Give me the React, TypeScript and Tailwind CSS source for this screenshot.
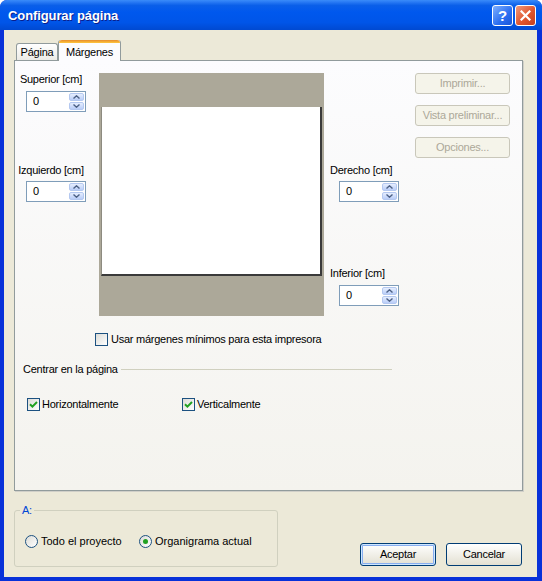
import React from "react";

function Arrow({ up }: { up: boolean }) {
  return (
    <svg width="7" height="4" viewBox="0 0 7 4">
      <path
        d={up ? "M0.5 3.5L3.5 0.8L6.5 3.5" : "M0.5 0.5L3.5 3.2L6.5 0.5"}
        fill="none"
        stroke="#4d6185"
        strokeWidth="1.4"
      />
    </svg>
  );
}

function Spinner() {
  return (
    <div className="flex h-[21px] w-[60px] border border-[#7f9db9] bg-white">
      <div className="flex-1 pl-[6px] text-[11px] leading-[19px]">0</div>
      <div className="flex w-[16px] flex-col gap-[1px] py-[1px] pr-[1px]">
        <div className="flex flex-1 items-center justify-center rounded-[2px] border border-[#b4c8f0] bg-gradient-to-b from-[#e6eefe] to-[#b9cdf8]">
          <Arrow up />
        </div>
        <div className="flex flex-1 items-center justify-center rounded-[2px] border border-[#b4c8f0] bg-gradient-to-b from-[#e6eefe] to-[#b9cdf8]">
          <Arrow up={false} />
        </div>
      </div>
    </div>
  );
}

function Check({ checked }: { checked?: boolean }) {
  return (
    <div className="flex h-[13px] w-[13px] shrink-0 items-center justify-center border border-[#1c5180] bg-gradient-to-br from-[#dcdcd7] to-white">
      {checked && (
        <svg width="9" height="9" viewBox="0 0 9 9">
          <path d="M1 4.3L3.4 6.7L8 2" fill="none" stroke="#21a121" strokeWidth="2" />
        </svg>
      )}
    </div>
  );
}

function Radio({ checked }: { checked?: boolean }) {
  return (
    <div className="flex h-[13px] w-[13px] shrink-0 items-center justify-center rounded-full border border-[#1c5180] bg-gradient-to-br from-[#dcdcd7] to-white">
      {checked && <div className="h-[5px] w-[5px] rounded-full bg-[#21a121]" />}
    </div>
  );
}

function DisabledButton({ label }: { label: string }) {
  return (
    <div className="flex h-[21px] w-[95px] items-center justify-center rounded-[3px] border border-[#c9c7ba] bg-[#f5f4ea] text-[11px] text-[#aca899]">
      {label}
    </div>
  );
}

export default function App() {
  return (
    <div className="flex h-[581px] w-[542px] flex-col overflow-hidden rounded-t-[7px] bg-[#0831d9] font-['Liberation_Sans',Arial,sans-serif] text-[11px] text-black">
      {/* Title bar */}
      <div className="flex h-[30px] shrink-0 items-center justify-between bg-[linear-gradient(180deg,#3a8cf9_0%,#2b7cf5_6%,#0a5fe9_18%,#0058ee_40%,#0055e8_75%,#0049d1_100%)] pl-[8px] pr-[6px]">
        <div className="text-[13px] font-bold leading-none tracking-[-0.1px] text-white [text-shadow:1px_1px_0_#0a1e8c]">
          Configurar página
        </div>
        <div className="flex gap-[2px]">
          <div className="flex h-[21px] w-[21px] items-center justify-center rounded-[3px] border border-white bg-[linear-gradient(135deg,#7fb0ff,#2a6df0_60%,#1a55d8)] text-[15px] font-bold leading-none text-white">
            ?
          </div>
          <div className="flex h-[21px] w-[21px] items-center justify-center rounded-[3px] border border-white bg-[linear-gradient(135deg,#f19a7c,#e0562f_55%,#c4401e)]">
            <svg width="11" height="11" viewBox="0 0 11 11">
              <path d="M1.5 1.5L9.5 9.5M9.5 1.5L1.5 9.5" stroke="white" strokeWidth="2.2" strokeLinecap="square" />
            </svg>
          </div>
        </div>
      </div>

      {/* Body */}
      <div className="flex flex-1 flex-col border-b-4 border-l-4 border-r-[5px] border-[#0831d9] bg-[#ece9d8] pl-[10px] pr-[15px] pt-[10px] tracking-[-0.25px]">
        {/* Tabs */}
        <div className="flex h-[20px] items-end pl-[2px]">
          <div className="flex h-[17px] w-[42px] items-center justify-center rounded-t-[3px] border border-b-0 border-[#919b9c] bg-gradient-to-b from-white to-[#ecebe6]">
            Página
          </div>
          <div className="relative z-10 -mb-px flex h-[21px] w-[63px] flex-col rounded-t-[3px] border-x border-[#919b9c] bg-[#fcfcfe]">
            <div className="h-[3px] rounded-t-[3px] bg-[linear-gradient(180deg,#e68b2c,#ffc73c)]" />
            <div className="flex flex-1 items-start justify-center pt-[1px]">Márgenes</div>
          </div>
        </div>

        {/* Panel */}
        <div className="flex h-[431px] w-[509px] flex-col border border-[#919b9c] bg-gradient-to-b from-[#fcfcfe] to-[#f4f3ee] shadow-[1px_1px_0_#d0cfc8]">
          <div className="flex items-start pt-[12px]">
            {/* Left column */}
            <div className="flex w-[72px] flex-col">
              <div className="text-center leading-[13px]">Superior [cm]</div>
              <div className="ml-[11px] mt-[5px]">
                <Spinner />
              </div>
              <div className="mt-[52px] text-center leading-[13px]">Izquierdo [cm]</div>
              <div className="ml-[11px] mt-[4px]">
                <Spinner />
              </div>
            </div>

            {/* Preview */}
            <div className="ml-[12px] flex h-[243px] w-[225px] flex-col bg-[#aca899] px-[2px] pt-[34px]">
              <div className="h-[169px] border-b-2 border-l border-r-2 border-b-[#3a3a3a] border-l-[#8d8b80] border-r-[#3a3a3a] bg-white" />
            </div>

            {/* Right labels */}
            <div className="ml-[6px] flex w-[70px] flex-col">
              <div className="mt-[91px] leading-[13px]">Derecho [cm]</div>
              <div className="ml-[9px] mt-[4px]">
                <Spinner />
              </div>
              <div className="mt-[65px] leading-[13px]">Inferior [cm]</div>
              <div className="ml-[9px] mt-[5px]">
                <Spinner />
              </div>
            </div>

            {/* Buttons */}
            <div className="ml-[15px] flex flex-col gap-[11px]">
              <DisabledButton label="Imprimir..." />
              <DisabledButton label="Vista preliminar..." />
              <DisabledButton label="Opciones..." />
            </div>
          </div>

          <div className="ml-[80px] mt-[17px] flex items-center gap-[3px]">
            <Check />
            <span className="leading-[13px]">Usar márgenes mínimos para esta impresora</span>
          </div>

          <div className="mt-[17px] flex w-[377px] items-center pl-[8px]">
            <span className="leading-[13px]">Centrar en la página</span>
            <div className="ml-[3px] h-px flex-1 bg-[#d0d0bf]" />
          </div>

          <div className="ml-[12px] mt-[22px] flex items-center">
            <div className="flex w-[155px] items-center gap-[2px]">
              <Check checked />
              <span className="leading-[13px]">Horizontalmente</span>
            </div>
            <div className="flex items-center gap-[2px]">
              <Check checked />
              <span className="leading-[13px]">Verticalmente</span>
            </div>
          </div>
        </div>

        {/* Bottom */}
        <div className="mt-[19px] flex items-end justify-between">
          <div className="relative h-[57px] w-[264px] rounded-[3px] border border-[#d0d0bf]">
            <span className="absolute left-[5px] top-[-7px] bg-[#ece9d8] px-[2px] leading-[13px] text-[#0046d5]">
              A:
            </span>
            <div className="flex items-center pl-[10px] pt-[24px] tracking-normal">
              <div className="flex w-[114px] items-center gap-[3px]">
                <Radio />
                <span className="leading-[13px]">Todo el proyecto</span>
              </div>
              <div className="flex items-center gap-[3px]">
                <Radio checked />
                <span className="leading-[13px]">Organigrama actual</span>
              </div>
            </div>
          </div>
          <div className="mb-[1px] flex gap-[10px]">
            <div className="flex h-[23px] w-[76px] items-center justify-center rounded-[3px] border border-[#003c74] bg-gradient-to-b from-white to-[#e3e0d2] shadow-[inset_0_0_0_1px_#cee7ff,inset_0_0_0_2px_#88aef0]">
              Aceptar
            </div>
            <div className="flex h-[23px] w-[76px] items-center justify-center rounded-[3px] border border-[#003c74] bg-gradient-to-b from-white to-[#e3e0d2]">
              Cancelar
            </div>
          </div>
        </div>
      </div>
    </div>
  );
}
